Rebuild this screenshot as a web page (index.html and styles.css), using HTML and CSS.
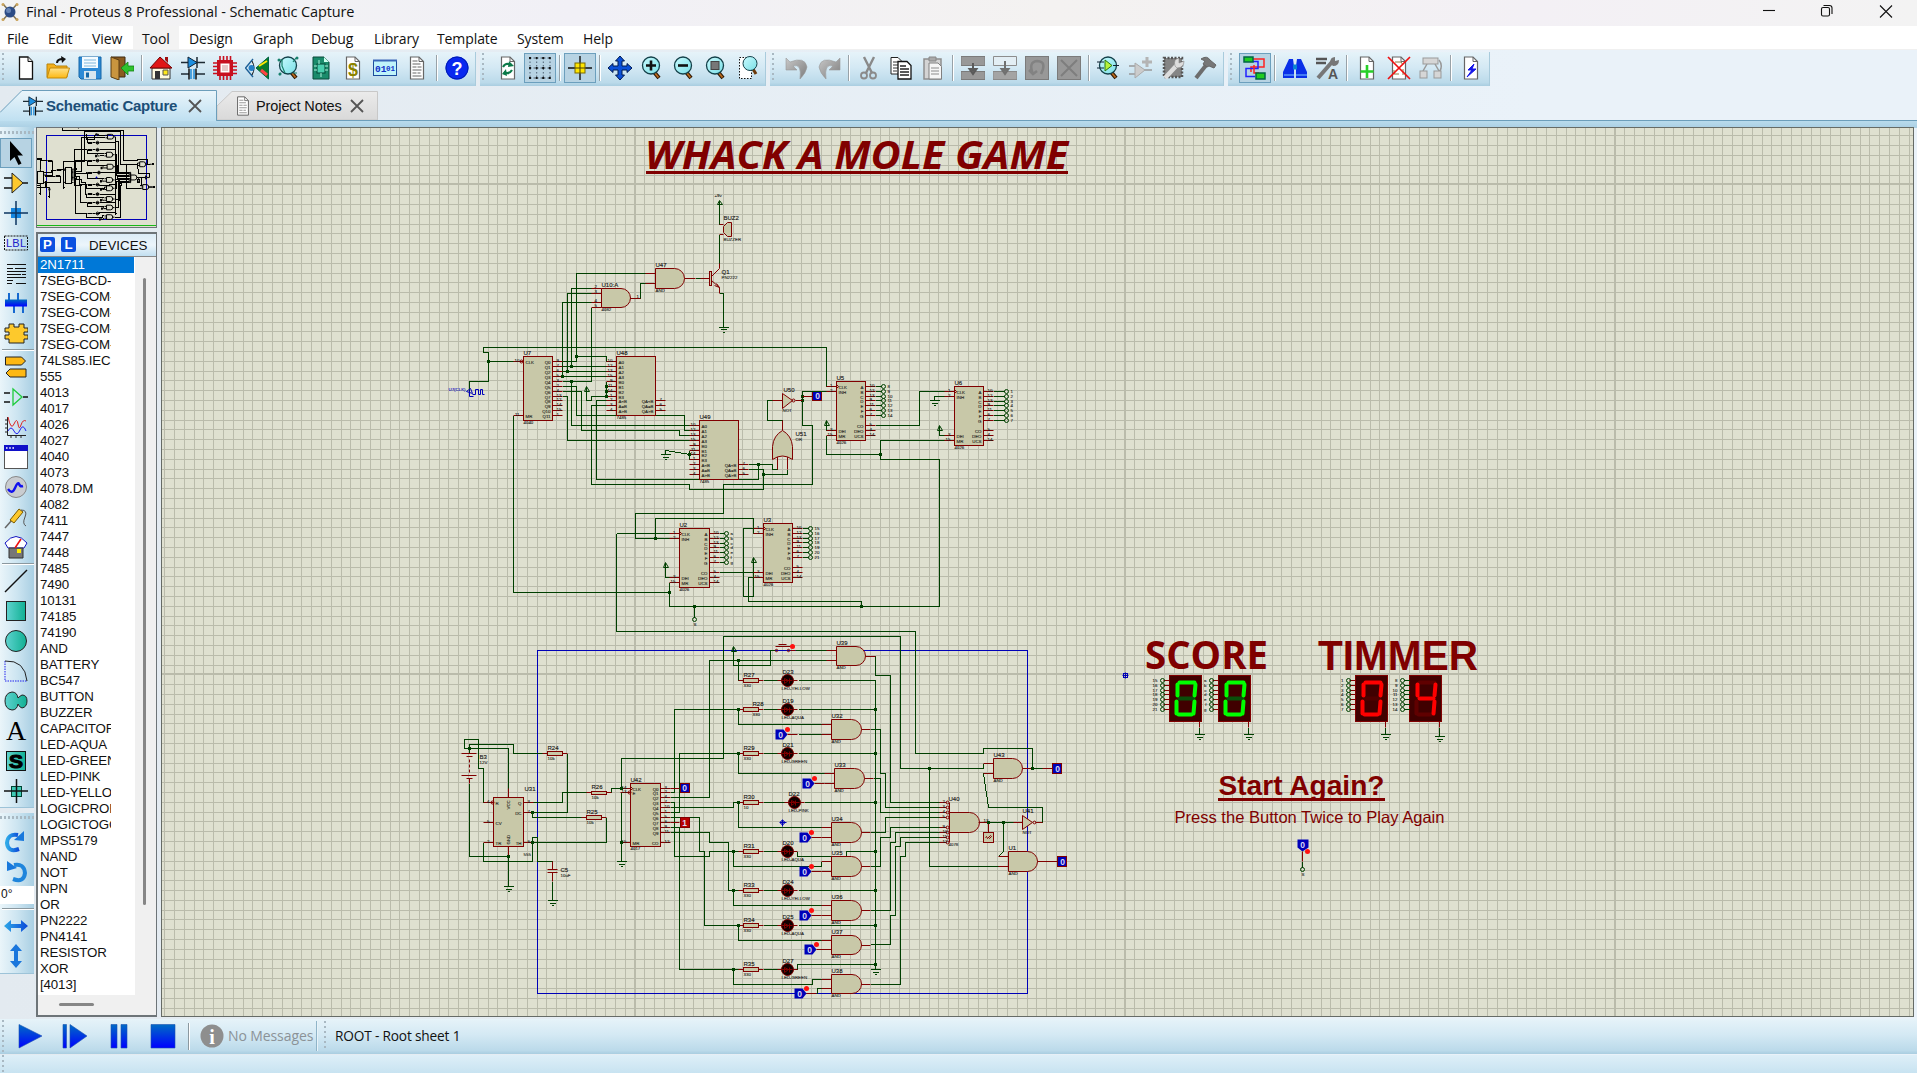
FILE: index.html
```html
<!DOCTYPE html>
<html lang="en">
<head>
<meta charset="utf-8">
<title>Final - Proteus 8 Professional - Schematic Capture</title>
<link rel="stylesheet" href="styles.css">
</head>
<body>
<svg class="defs" width="0" height="0">
  <defs>
    <linearGradient id="gGlass" x1="0" y1="0" x2="1" y2="1"><stop offset="0" stop-color="#c9fbff"/><stop offset="1" stop-color="#7adfe6"/></linearGradient>
    <linearGradient id="gFold" x1="0" y1="0" x2="0" y2="1"><stop offset="0" stop-color="#ffe28a"/><stop offset="1" stop-color="#fdb813"/></linearGradient>
    <linearGradient id="gTeal" x1="0" y1="0" x2="1" y2="0"><stop offset="0" stop-color="#5fd3cf"/><stop offset="1" stop-color="#10b093"/></linearGradient>
    <linearGradient id="gBlue" x1="0" y1="0" x2="0" y2="1"><stop offset="0" stop-color="#006cc4"/><stop offset="1" stop-color="#0000ff"/></linearGradient>
    <linearGradient id="gSky" x1="0" y1="0" x2="1" y2="0"><stop offset="0" stop-color="#2ea9e8"/><stop offset="1" stop-color="#0a48d8"/></linearGradient>
    <linearGradient id="gGrey" x1="0" y1="0" x2="1" y2="1"><stop offset="0" stop-color="#c8c8c8"/><stop offset="1" stop-color="#7c7c7c"/></linearGradient>
    <symbol id="mag" viewBox="0 0 24 24"><path d="M14 16l5 6" stroke="#2a1400" stroke-width="4"/><path d="M14.500 16.500l4 5" stroke="#b8691c" stroke-width="2"/><circle cx="11" cy="9.500" r="8.500" fill="url(#gGlass)" stroke="#14414a" stroke-width="1.300"/></symbol>
    <symbol id="page" viewBox="0 0 24 24"><path d="M5.500 1H14l4.500 4.500V23h-13z" fill="#fff" stroke="#666" stroke-width="1.200"/><path d="M14 1v4.500h4.500" fill="none" stroke="#666"/></symbol>
    <symbol id="comp" viewBox="0 0 24 24"><path d="M0 6.500h24M0 18h8M15 18h9M16 1v11" stroke="#1c2a33" stroke-width="1.500" fill="none"/><path d="M7 1v11l9-5.500z" fill="#1d8fe0" stroke="#123"/><path d="M8 12.500v11M15 12.500v11" stroke="#111" stroke-width="1.500"/><path d="M10 13v10M13 13v10" stroke="#2a8fd8" stroke-width="1.600"/></symbol>
    <symbol id="notes" viewBox="0 0 24 24"><use href="#page"/><path d="M7.500 5h5M7.500 8h8M7.500 11h4M12.500 11h4M7.500 14h9M7.500 17h4M12.500 17h3M7.500 20h9" stroke="#999" stroke-width="1.300"/></symbol>
  </defs>
</svg>

<header class="titlebar">
  <svg class="appicon" viewBox="0 0 20 20"><path d="M3 2l14 16M17 2L3 18" stroke="#7d7259" stroke-width="1.500"/><circle cx="10" cy="10" r="5.500" fill="#2c4c86"/><circle cx="8.500" cy="8.500" r="2.500" fill="#6684b5"/><g fill="#c9a35a"><circle cx="3" cy="2.500" r="1.500"/><circle cx="17" cy="2.500" r="1.500"/><circle cx="3" cy="17.500" r="1.500"/><circle cx="17" cy="17.500" r="1.500"/></g></svg>
  <span class="title">Final - Proteus 8 Professional - Schematic Capture</span>
  <svg class="winbtns" viewBox="0 0 140 26" fill="none" stroke="#111" stroke-width="1.100"><path d="M2 10.500h12"/><rect x="60.500" y="7.500" width="8" height="8.500" rx="1.500"/><path d="M62.500 5.500h6q2.500 0 2.500 2.500v6"/><path d="M119 5.500l12 12M131 5.500l-12 12"/></svg>
</header>
<nav class="menu">
  <span class="m1">File</span><span class="m2">Edit</span><span class="m3">View</span><span class="m4 hover">Tool</span><span class="m5">Design</span><span class="m6">Graph</span><span class="m7">Debug</span><span class="m8">Library</span><span class="m9">Template</span><span class="m10">System</span><span class="m11">Help</span>
</nav>

<div class="toolbars">
  <div class="tb tb1">
    <b class="cell"><svg viewBox="0 0 24 24"><path d="M5.500 1H14l4.500 4.500V23h-13z" fill="#fff" stroke="#111" stroke-width="1.300"/><path d="M14 1v4.500h4.500" fill="#ddd" stroke="#111"/></svg></b>
    <b class="cell"><svg viewBox="0 0 24 24"><path d="M1 8h7l2 2h11v11H1z" fill="#f3b01c" stroke="#b98208"/><path d="M4 12h19.500l-3 10H1z" fill="url(#gFold)" stroke="#c48a0a"/><path d="M11 7q0-4 6-4" fill="none" stroke="#111" stroke-width="2"/><path d="M15 0l5 3-4 4z" fill="#111"/></svg></b>
    <b class="cell"><svg viewBox="0 0 24 24"><path d="M1 1h22v22H3l-2-2z" fill="#2d8ad6" stroke="#1567a8"/><path d="M4 1h16v11H4z" fill="#f4fbff"/><path d="M6 4h12M6 7h12M6 10h12" stroke="#7fb6dc"/><path d="M6 15h12v8H6z" fill="#d8e6ef"/><path d="M8 16.500h3v5H8z" fill="#1567a8"/></svg></b>
    <b class="cell"><svg viewBox="0 0 24 24"><path d="M1 1h14v20H9" fill="#8a5b20" stroke="#3e2a10"/><path d="M1 1l8 3v20l-8-3z" fill="#c9953f" stroke="#5a3d13"/><path d="M11 12l7-6v4h6v5h-6v4z" fill="#2fc32f" stroke="#148014" stroke-width=".8"/></svg></b>
    <i class="sep"></i>
    <b class="cell"><svg viewBox="0 0 24 24"><path d="M3 12h18v11H3z" fill="#fffbe0" stroke="#333"/><path d="M1 12L11 1l12 11z" fill="#e01717" stroke="#700"/><path d="M16 1h3v6l-3-3z" fill="#a01010"/><path d="M6 15h5v8H6z" fill="#333"/><path d="M14 14h5v5h-5z" fill="#ffe81c" stroke="#555"/></svg></b>
    <b class="cell"><svg viewBox="0 0 24 24"><use href="#comp"/></svg></b>
    <b class="cell"><svg viewBox="0 0 24 24"><path d="M7 0v24M10.500 0v24M14 0v24M17.500 0v24M0 7h24M0 10.500h24M0 14h24M0 17.500h24" stroke="#c80f1f" stroke-width="1.600"/><rect x="4" y="4" width="16" height="16" fill="#c80f1f"/><rect x="7.500" y="7.500" width="9" height="9" fill="#fff"/><path d="M9 9h6v6H9z" fill="#e8c8c8"/></svg></b>
    <b class="cell"><svg viewBox="0 0 24 24"><path d="M8 3L0.500 12 8 21" fill="none" stroke="#1d5f96" stroke-width="1.400"/><path d="M7 5Q11 12 7 19" fill="none" stroke="#111"/><circle cx="6.500" cy="12" r="3" fill="#2580c8"/><path d="M11 12L23.500 1v22z" fill="#0a7b2b" stroke="#064"/><path d="M16 14l6 5" stroke="#f44" stroke-width="3"/><path d="M14 10l8-5" stroke="#ffe800" stroke-width="2"/></svg></b>
    <b class="cell"><svg viewBox="0 0 24 24"><use href="#mag"/><path d="M1 4h4v6l3 7M19 2l-3 4M4 17l-2 2M20 17h-4" fill="none" stroke="#18806c" stroke-width="1.200"/><circle cx="2" cy="4" r="1.500" fill="#18806c"/><circle cx="20" cy="2" r="1.500" fill="#18806c"/><circle cx="3" cy="18" r="1.500" fill="#18806c"/></svg></b>
    <b class="cell"><svg viewBox="0 0 24 24"><path d="M4 1h11l5 5v17H4z" fill="#1a8b6b" stroke="#0b4b3a"/><path d="M15 1v5h5" fill="#cfe"/><rect x="8" y="8" width="8" height="9" fill="#49cfae" stroke="#043"/><path d="M5 10h3M5 14h3M16 10h3M16 14h3M10 4v4M12 17v4" stroke="#aef2dd"/></svg></b>
    <b class="cell"><svg viewBox="0 0 24 24"><use href="#page"/><text x="12" y="20" font-size="18" font-weight="bold" text-anchor="middle" fill="#8a8200" class="arial">$</text></svg></b>
    <b class="cell"><svg viewBox="0 0 24 24"><rect x=".5" y="4.500" width="23" height="15" fill="#bff3fa" stroke="#1c4c9c"/><path d="M0 4.500h24" stroke="#3a66b8" stroke-width="2"/><text x="2" y="15.500" font-size="9.500" font-weight="bold" fill="#1030c8" class="mono">01</text><text x="13" y="14.500" font-size="7.500" font-weight="bold" fill="#1030c8" class="mono">01</text></svg></b>
    <b class="cell"><svg viewBox="0 0 24 24"><use href="#notes"/></svg></b>
    <i class="sep"></i>
    <b class="cell"><svg viewBox="0 0 24 24"><circle cx="12" cy="12" r="11.500" fill="#0a28f0"/><circle cx="12" cy="12" r="11" fill="none" stroke="#001cae"/><text x="12" y="18.500" font-size="18" font-weight="bold" text-anchor="middle" fill="#fff" class="arial">?</text></svg></b>
  </div>
  <div class="tb tb2">
    <b class="cell"><svg viewBox="0 0 24 24"><use href="#page"/><path d="M7 11q3-5 8-2" fill="none" stroke="#0b7a4a" stroke-width="2.200"/><path d="M13 5l5 5-6 1zM10 13l-4 5 5 2z" fill="#0b7a4a"/><path d="M16 14q-3 5-8 2" fill="none" stroke="#0b7a4a" stroke-width="2.200"/></svg></b>
    <b class="cell on"><svg viewBox="0 0 24 24"><path d="M2 2h20M2 12h20M2 22h20M2 2v20M8.700 2v20M15.300 2v20M22 2v20" stroke="#345" stroke-dasharray="1.500 2" stroke-width=".8" fill="none"/><path d="M1 2h22M1 12h22M1 22h22" stroke="#111" stroke-width="2" stroke-dasharray="2 4.600"/></svg></b>
    <i class="sep"></i>
    <b class="cell on"><svg viewBox="0 0 24 24"><path d="M0 12h24M12 0v24" stroke="#111" stroke-width="1.400"/><rect x="7" y="7" width="10" height="10" fill="#ffe600" stroke="#7a6a00"/><path d="M7 12h10M12 7v10" stroke="#4a3f00"/></svg></b>
    <i class="sep"></i>
    <b class="cell"><svg viewBox="0 0 24 24"><path d="M12 0l4.500 5H14v5h5V7.500l5 4.500-5 4.500V14h-5v5h2.500L12 24l-4.500-5H10v-5H5v2.500L0 12l5-4.500V10h5V5H7.500z" fill="#0b50d8" stroke="#001a50"/></svg></b>
    <b class="cell"><svg viewBox="0 0 24 24"><use href="#mag"/><path d="M6 9.500h10M11 4.500v10" stroke="#111" stroke-width="2.600"/></svg></b>
    <b class="cell"><svg viewBox="0 0 24 24"><use href="#mag"/><path d="M6 9.500h10" stroke="#111" stroke-width="2.600"/></svg></b>
    <b class="cell"><svg viewBox="0 0 24 24"><use href="#mag"/><rect x="7" y="5.500" width="8" height="8" fill="#777" stroke="#444"/></svg></b>
    <b class="cell"><svg viewBox="0 0 24 24"><rect x="3.500" y="1.500" width="12" height="21" fill="#fff" stroke="#111" stroke-dasharray="1.500 1.500"/><path d="M17 13l3 5" stroke="#6d3a0a" stroke-width="3"/><circle cx="14" cy="7.500" r="7" fill="url(#gGlass)" stroke="#14414a"/></svg></b>
  </div>
  <div class="tb tb3">
    <b class="cell"><svg viewBox="0 0 24 24"><path d="M1 2v12h11l-4-4q9-3 7 13 6-6 7-12Q20 0 5 6z" fill="url(#gGrey)" stroke="#999" stroke-width=".6"/></svg></b>
    <b class="cell"><svg viewBox="0 0 24 24"><path d="M23 2v12H12l4-4Q7 7 9 23 3 17 2 11 4 0 19 6z" fill="url(#gGrey)" stroke="#999" stroke-width=".6"/></svg></b>
    <i class="sep"></i>
    <b class="cell"><svg viewBox="0 0 24 24" fill="none" stroke="#8a8a8a"><path d="M7 1l8 16M17 1L9 17" stroke-width="2.400"/><circle cx="7" cy="19.500" r="3" stroke-width="1.800"/><circle cx="16" cy="19.500" r="3" stroke-width="1.800"/></svg></b>
    <b class="cell"><svg viewBox="0 0 24 24"><path d="M2 1.500h7l4 4V18H2z" fill="#fff" stroke="#222"/><path d="M4 6h6M4 9h6M4 12h6M4 15h4" stroke="#333"/><path d="M9 5.500h9l4 4V23H9z" fill="#fff" stroke="#111" stroke-width="1.300"/><path d="M11 10h6M11 13h9M11 16h9M11 19h9" stroke="#222" stroke-width="1.300"/></svg></b>
    <b class="cell"><svg viewBox="0 0 24 24"><path d="M3 3h17v20H3z" fill="#d4d4d4" stroke="#8e8e8e" stroke-width="1.500"/><path d="M8 1h7v4H8z" fill="#aaa" stroke="#888"/><path d="M8 7h9l3.500 3.500V23H8z" fill="#f6f6f6" stroke="#808080"/><path d="M10 12h8M10 15h8M10 18h8" stroke="#8c8c8c"/></svg></b>
    <i class="sep"></i>
    <b class="cell"><svg viewBox="0 0 24 24"><path d="M0 .5h24v9H0zM0 15.500h24v8H0z" fill="#989898" stroke="#7b7b7b"/><path d="M12 7v8M8.500 13h7L12 18z" fill="#666" stroke="#5a5a5a" stroke-width="2"/></svg></b>
    <b class="cell"><svg viewBox="0 0 24 24"><path d="M.5.500h23v9H.5z" fill="#e3eef4" stroke="#8d8d8d"/><path d="M0 15.500h24v8H0z" fill="#a4a4a4" stroke="#8a8a8a"/><path d="M12 5v10M8.500 13h7L12 18z" fill="#777" stroke="#707070" stroke-width="2"/></svg></b>
    <b class="cell"><svg viewBox="0 0 24 24"><rect x=".5" y=".5" width="23" height="23" fill="#989898" stroke="#7b7b7b"/><path d="M8 18Q3 6 12 5q8 0 6 8l-2 5M4 14l4 4 4-3" fill="none" stroke="#828282" stroke-width="2.500"/></svg></b>
    <b class="cell"><svg viewBox="0 0 24 24"><rect x=".5" y=".5" width="23" height="23" fill="#989898" stroke="#7b7b7b"/><path d="M4 4l16 16M20 4L4 20" stroke="#7e7e7e" stroke-width="2"/></svg></b>
    <i class="sep"></i>
    <b class="cell"><svg viewBox="0 0 24 24"><use href="#mag"/><path d="M0 6h7M0 12h7M16 9.500h6" stroke="#123"/><path d="M8 4l7 5.500L8 15z" fill="#b7f23c" stroke="#2b7a12"/></svg></b>
    <b class="cell"><svg viewBox="0 0 24 24"><path d="M0 10h7M0 18h7M15 14h8" stroke="#999" stroke-width="1.500"/><path d="M6 7v15l10-8z" fill="#ccc" stroke="#aaa"/><path d="M18 1v10M13 6h10" stroke="#b4b4b4" stroke-width="3"/></svg></b>
    <b class="cell"><svg viewBox="0 0 24 24"><rect x="3" y="2" width="18" height="19" fill="#858585" stroke="#555" stroke-dasharray="2 1.500" stroke-width="2.500"/><path d="M4 22L16 9" stroke="#ddd" stroke-width="4.500"/><path d="M14 10q-2-7 4-8v5l5-2q0 7-7 7z" fill="#ddd" stroke="#888" stroke-width=".6"/></svg></b>
    <b class="cell"><svg viewBox="0 0 24 24"><path d="M3 22L14 8" stroke="#6d6d6d" stroke-width="4"/><path d="M8 3q6-4 9 1l6 5-2 3-5-2-2 1-4-3 2-3z" fill="#777" stroke="#666"/></svg></b>
  </div>
  <div class="tb tb4">
    <b class="cell on"><svg viewBox="0 0 24 24" fill="none" stroke-width="1.500"><path d="M10 3h11v8H8v5" stroke="#f22"/><path d="M10 5.500h5v7H3v8h9" stroke="#22f"/><path d="M11 9v8h5" stroke="#f22"/><path d="M1 1h9v5H1zM13 17h9v6h-9z" fill="#20cc20" stroke="#064"/></svg></b>
    <i class="sep"></i>
    <b class="cell"><svg viewBox="0 0 24 24"><path d="M6 3h4l1 7v12H0v-6zM18 3h-4l-1 7v12h11v-6z" fill="#0a30e8"/><path d="M10 11h4" stroke="#0b82d6" stroke-width="5"/><path d="M1 19h10M13 19h11" stroke="#7fc8ff"/></svg></b>
    <b class="cell"><svg viewBox="0 0 24 24"><path d="M1 3h11M1 7h10" stroke="#555" stroke-width="2.500"/><path d="M3 22L17 6" stroke="#777" stroke-width="4"/><path d="M15 7q0-6 5-6v4l4-1q0 6-6 6z" fill="#777"/><text x="18" y="23" font-size="14" font-weight="bold" text-anchor="middle" fill="#555" class="arial">A</text></svg></b>
    <i class="sep"></i>
    <b class="cell"><svg viewBox="0 0 24 24"><use href="#page"/><path d="M12 9v13M5.500 15.500h13" stroke="#28d028" stroke-width="2.600"/></svg></b>
    <b class="cell"><svg viewBox="0 0 24 24"><use href="#page"/><path d="M8 6h6l2 3M7 14v4h5M16 13v6" fill="none" stroke="#8a7a40"/><path d="M1 1l22 22M23 1L1 23" stroke="#f01010" stroke-width="1.700"/></svg></b>
    <b class="cell"><svg viewBox="0 0 24 24" fill="#d6d6d6" stroke="#999"><path d="M8 8l-4 7M16 8l4 7M20 4q4 5 1 11" fill="none" stroke-width="1.500"/><rect x="4" y="2" width="15" height="6"/><rect x="1" y="15" width="7" height="7"/><rect x="15" y="15" width="7" height="7"/></svg></b>
    <i class="sep"></i>
    <b class="cell"><svg viewBox="0 0 24 24"><use href="#page"/><path d="M15 8l-6 6h4l-5 7 9-8h-4z" fill="#1414e8" stroke="#1414e8"/></svg></b>
  </div>
</div>

<div class="tabs">
  <svg class="tabshape" viewBox="0 0 400 35"><defs><linearGradient id="tabA" x1="0" y1="0" x2="0" y2="1"><stop offset="0" stop-color="#eaf5fb"/><stop offset="1" stop-color="#bfe0f1"/></linearGradient><linearGradient id="tabB" x1="0" y1="0" x2="0" y2="1"><stop offset="0" stop-color="#ebebeb"/><stop offset="1" stop-color="#d9d9d9"/></linearGradient></defs><path d="M217 34V20l15-14.500h145.500V34z" fill="url(#tabB)" stroke="#c8c8c8"/><path d="M0 26.500L22 4.500h194.500V35H0z" fill="url(#tabA)"/><path d="M0 26.500L22 4.500h194.500v30H400" fill="none" stroke="#6c9ebb"/></svg>
  <div class="tab t1"><svg viewBox="0 0 24 24"><use href="#comp"/></svg><span>Schematic Capture</span><svg class="x" viewBox="0 0 14 14"><path d="M1 1l12 12M13 1L1 13" stroke="#555" stroke-width="1.800"/></svg></div>
  <div class="tab t2"><svg viewBox="0 0 24 24"><use href="#notes"/></svg><span>Project Notes</span><svg class="x" viewBox="0 0 14 14"><path d="M1 1l12 12M13 1L1 13" stroke="#555" stroke-width="1.800"/></svg></div>
</div>

<main class="work">
  <div class="modes">
    <div class="mgroup g1">
      <b class="on"><svg viewBox="0 0 24 24"><path d="M6 0v20l4.500-4 4 8 3-1.500-4-8H19z" fill="#000"/></svg></b>
      <b><svg viewBox="0 0 24 24"><path d="M0 7h8M0 17h8M19 12h5" stroke="#111" stroke-width="1.400"/><path d="M8 2v20l11-10z" fill="#fdc92c" stroke="#222"/></svg></b>
      <b><svg viewBox="0 0 24 24"><rect x="7" y="7" width="10" height="10" fill="#1486e0"/><path d="M0 12h24M12 0v24" stroke="#0b3560" stroke-width="1.500"/></svg></b>
      <b><svg viewBox="0 0 24 24"><rect x=".5" y="5" width="23" height="14" fill="none" stroke="#111" stroke-dasharray="2 1"/><text x="12" y="16" font-size="11" textLength="20" text-anchor="middle" fill="#2020c8" class="arial">LBL</text></svg></b>
      <b><svg viewBox="0 0 24 24"><path d="M3 3.500h19M3 7.500h6M11 7.500h11M3 10.500h19M3 13.500h14M18 13.500h4M3 16.500h19M3 19.500h6M12 22.500h10M3 22.500h5" stroke="#111" stroke-width="1.200"/></svg></b>
      <b><svg viewBox="0 0 24 24"><path d="M5 2v8M14 2v8M10 14v8M19 14v8" stroke="#1668d0" stroke-width="2"/><rect x="1" y="8.500" width="22" height="7" fill="url(#gBlue)"/></svg></b>
      <b><svg viewBox="0 0 24 24"><path d="M5 3h5v3h5V3h5v4h4v4h-4v3h4v4h-4v4H5v-4H1v-4h4v-3H1V7h4z" fill="#fdc92c" stroke="#222"/></svg></b>
      <i></i>
      <b><svg viewBox="0 0 24 24"><path d="M1.500 2h16l4 4-4 4h-16zM22 14H6l-4 4 4 4h16z" fill="#fdb813" stroke="#222"/></svg></b>
      <b><svg viewBox="0 0 24 24"><path d="M0 8h6M0 17h6M19 12h5" stroke="#111" stroke-width="1.400"/><path d="M9 4v16l9-8z" fill="none" stroke="#1ecb3c" stroke-width="1.300"/></svg></b>
      <b><svg viewBox="0 0 24 24" fill="none"><path d="M3.500 2v18.500H22M1 5h2M1 9h2M1 13h2M1 17h2M7 20v3M12 20v3M17 20v3" stroke="#222"/><path d="M4 2q3 14 6 7t4 0 3 1 5-4" stroke="#d22"/><path d="M4 16q3-6 6 0t6-1 6 1" stroke="#22e"/></svg></b>
      <b><svg viewBox="0 0 24 24"><rect x=".500" y=".500" width="23" height="23" fill="#fff" stroke="#555"/><path d="M0 0h24v6H0z" fill="#1010c8"/><path d="M2 3h8" stroke="#fff" stroke-width="1.600" stroke-dasharray="1.600 1.600"/></svg></b>
      <b><svg viewBox="0 0 24 24"><circle cx="12" cy="12" r="10.500" fill="#c9ccd0" stroke="#888"/><path d="M4 14q4 6 7-1t4-4 4 2" fill="none" stroke="#1111ee" stroke-width="2.400"/></svg></b>
      <b><svg viewBox="0 0 24 24"><path d="M1 23l7-8" stroke="#666" stroke-width="1.500"/><path d="M6 15L15 4l4 3-9 11z" fill="#fdc92c" stroke="#7a5a00"/><path d="M17 5q7 0 4 7t1 9" fill="none" stroke="#555"/></svg></b>
      <b><svg viewBox="0 0 24 24"><path d="M1 8q11-13 22 0l-3 5H4z" fill="#fff" stroke="#1414c0"/><path d="M5 13h14v10H5z" fill="#777" stroke="#333"/><path d="M11 13l6-9" stroke="#e11" stroke-width="1.600"/><path d="M13 14h4v4h-4z" fill="#fe0"/></svg></b>
      <i></i>
      <b><svg viewBox="0 0 24 24"><path d="M1 23L23 1" stroke="#111" stroke-width="1.500"/></svg></b>
      <b><svg viewBox="0 0 24 24"><rect x="2.500" y="2.500" width="19" height="19" fill="url(#gTeal)" stroke="#222"/></svg></b>
      <b><svg viewBox="0 0 24 24"><circle cx="12" cy="12" r="10.500" fill="url(#gTeal)" stroke="#222"/></svg></b>
      <b><svg viewBox="0 0 24 24" fill="none"><path d="M1 2v20h22" stroke="#22e" stroke-dasharray="1.500 1"/><path d="M1 2q20-1 22 20" stroke="#222"/></svg></b>
      <b><svg viewBox="0 0 24 24"><path d="M8 3q5 0 6 6 2-2 4-3 5 0 5 6t-5 7q-3-1-4-4-1 6-6 6-7-1-7-9t7-9z" fill="url(#gTeal)" stroke="#222"/></svg></b>
      <b><svg viewBox="0 0 24 24"><text x="12" y="21" font-size="28" text-anchor="middle" class="serif">A</text></svg></b>
      <b><svg viewBox="0 0 24 24"><rect x="2.500" y="2.500" width="19" height="19" fill="url(#gTeal)" stroke="#111"/><text x="12" y="18.500" font-size="18" font-weight="bold" textLength="14" lengthAdjust="spacingAndGlyphs" text-anchor="middle" class="arial heavy">S</text></svg></b>
      <b><svg viewBox="0 0 24 24"><rect x="7.500" y="7.500" width="10" height="10" fill="#3fc9b4" stroke="#043"/><path d="M0 12h24M12.500 0v24" stroke="#111" stroke-width="1.500"/></svg></b>
    </div>
    <div class="mgroup g2">
      <b><svg viewBox="0 0 24 24"><path d="M15 20Q4 24 3 14 4 4 14 6" fill="none" stroke="url(#gSky)" stroke-width="4"/><path d="M20 2v10l-10-1z" fill="#1878dc"/></svg></b>
      <b><svg viewBox="0 0 24 24"><path d="M9 20Q20 24 21 14 20 4 10 6" fill="none" stroke="#1f85dc" stroke-width="4"/><path d="M3 2v10l10-3z" fill="#1878dc"/></svg></b>
      <span class="angle">0°</span>
      <i></i>
      <b><svg viewBox="0 0 24 24"><path d="M0 12l7-6v4h10V6l7 6-7 6v-4H7v4z" fill="url(#gSky)"/></svg></b>
      <b><svg viewBox="0 0 24 24"><path d="M12 0l6 7h-4v10h4l-6 7-6-7h4V7H6z" fill="#1a76dc"/></svg></b>
    </div>
  </div>
  <aside class="side">
    <svg class="overview" id="overview" viewBox="36 127 121 101"></svg>
    <section class="devices">
      <h2><b>P</b><b>L</b><span>DEVICES</span></h2>
      <div class="listwrap">
        <ul>
          <li class="sel">2N1711</li><li>7SEG-BCD-</li><li>7SEG-COM-</li><li>7SEG-COM-</li><li>7SEG-COM-</li><li>7SEG-COM-</li><li>74LS85.IEC</li><li>555</li><li>4013</li><li>4017</li><li>4026</li><li>4027</li><li>4040</li><li>4073</li><li>4078.DM</li><li>4082</li><li>7411</li><li>7447</li><li>7448</li><li>7485</li><li>7490</li><li>10131</li><li>74185</li><li>74190</li><li>AND</li><li>BATTERY</li><li>BC547</li><li>BUTTON</li><li>BUZZER</li><li>CAPACITOR</li><li>LED-AQUA</li><li>LED-GREEN</li><li>LED-PINK</li><li>LED-YELLO</li><li>LOGICPROB</li><li>LOGICTOGG</li><li>MPS5179</li><li>NAND</li><li>NOT</li><li>NPN</li><li>OR</li><li>PN2222</li><li>PN4141</li><li>RESISTOR</li><li>XOR</li><li>[4013]</li>
        </ul>
        <div class="vbar"></div>
      </div>
      <div class="hbar"></div>
    </section>
  </aside>
  <svg class="sheet" id="sheet" viewBox="161 127 1753 890"></svg>
</main>

<footer class="simbar">
  <svg viewBox="0 0 200 34"><g fill="url(#gBlue)" stroke="#1c50b0" stroke-width=".6"><path d="M19 5.500L42 17 19 29z"/><path d="M63 5.500h3.500V29H63zM70 5.500L87 17 70 29zM111 5.500h6V29h-6zM121 5.500h6V29h-6zM151 5.500h24V29h-24z"/></g><path d="M188.500 4v27" stroke="#8b989f"/><path d="M189.500 4v27" stroke="#fff"/><path d="M3 1v32" stroke="#a8b8c2" stroke-width="2" stroke-dasharray="2 3"/></svg>
  <svg class="info" viewBox="0 0 24 24"><circle cx="12" cy="12" r="11.500" fill="#8e8e8e"/><text x="12" y="19.500" font-size="20" font-weight="bold" text-anchor="middle" fill="#fff" class="serif">i</text></svg>
  <span class="nomsg">No Messages</span>
  <i class="bsep"></i>
  <i class="bgrip"></i>
  <span class="root">ROOT - Root sheet 1</span>
</footer>
<div class="status"></div>
<script src="schematic.js"></script>
</body>
</html>
```
FILE: styles.css
```css
* { box-sizing: border-box; }
body {
  margin: 0; width: 1917px; height: 1073px; overflow: hidden;
  display: flex; flex-direction: column;
  background: linear-gradient(90deg, #e3eaf0, #eaf2f9 80%);
  font-family: "Open Sans", "Noto Sans", sans-serif; color: #111;
}
.defs { position: absolute; }
b, i { font-weight: normal; font-style: normal; }
.arial { font-family: "Liberation Sans", sans-serif; }
.mono { font-family: "Liberation Mono", monospace; }
.serif { font-family: "Liberation Serif", serif; }
.heavy { stroke: #000; stroke-width: 1px; }

.titlebar { height: 26px; flex: none; display: flex; align-items: center; background: linear-gradient(90deg, #f3f3f3, #f1f0f6 30%, #f4f2f1 55%, #f3f0f5 80%, #f3f3f3); }
.appicon { width: 20px; height: 20px; margin-top: -2px; }
.title { margin: -4px 0 0 6px; font-size: 14.5px; letter-spacing: -0.13px; white-space: nowrap; }
.winbtns { width: 140px; height: 26px; margin-left: auto; margin-right: 16px; }

.menu { height: 23px; flex: none; display: flex; background: #fff; font-size: 14px; line-height: 25px; letter-spacing: -0.1px; }
.menu span { white-space: nowrap; }
.m1 { width: 41px; padding-left: 7px; }
.m2 { width: 44px; padding-left: 7px; }
.m3 { width: 48px; padding-left: 7px; }
.m4 { width: 46px; padding-left: 9px; }
.m5 { width: 64px; padding-left: 10px; }
.m6 { width: 58px; padding-left: 10px; }
.m7 { width: 63px; padding-left: 10px; }
.m8 { width: 63px; padding-left: 10px; }
.m9 { width: 80px; padding-left: 10px; }
.m10 { width: 65px; padding-left: 10px; }
.m11 { padding-left: 11px; }
.hover { background: #f3f3f3; }

.toolbars { height: 37px; flex: none; padding-top: 2px; border-top: 1px solid #f0f0f0; display: flex; }
.tb { height: 34px; padding-bottom: 2px; display: flex; align-items: center; background: linear-gradient(#e6f3f9, #d4e9f4 45%, #bbdaea 90%, #a9cde0); border-right: 1px solid #a9cbdc; }
.tb::before { content: ""; width: 2px; height: 30px; margin-left: 2px; background: repeating-linear-gradient(#a8b8c2 0 2px, transparent 2px 5px); }
.tb1 { width: 476px; margin-right: 4px; }
.tb2 { width: 286px; margin-right: 4px; }
.tb3 { width: 454px; margin-right: 4px; }
.tb4 { width: 262px; }
.tb1::before { margin-right: 6px; }
.tb2::before { margin-right: 8px; }
.tb3::before { margin-right: 7px; }
.tb4::before { margin-right: 7px; }
.cell { width: 32px; height: 30px; flex: none; display: flex; align-items: center; justify-content: center; }
.cell svg { width: 24px; height: 24px; }
.on { background: #b7d3e3; border: 1px solid #6c9fbd; }
.sep { width: 8px; height: 26px; flex: none; background: linear-gradient(#98a2a8, #98a2a8) 3px 0 / 1px 100% no-repeat, linear-gradient(#fff, #fff) 4px 0 / 1px 100% no-repeat; }
.tb1 .sep:first-of-type { width: 7px; }

.tabs { height: 35px; flex: none; position: relative; border-bottom: 1px solid #6c9ebb; display: flex; }
.tabshape { position: absolute; left: 0; top: 0; width: 400px; height: 35px; }
.tab { position: relative; display: flex; align-items: center; padding-top: 5px; font-family: "Liberation Sans", sans-serif; white-space: nowrap; }
.tab svg { width: 20px; height: 20px; }
.tab .x { width: 14px; height: 14px; }
.t1 { width: 217px; padding-left: 23px; font-size: 15px; font-weight: bold; color: #1c4f78; }
.t1 span { width: 131px; margin: 0 11px 0 3px; letter-spacing: -0.28px; }
.t2 { width: 160px; padding-left: 16px; font-size: 14.5px; color: #111; }
.t2 span { width: 82px; margin: 0 12px 0 3px; letter-spacing: -0.1px; }

.work { height: 897px; flex: none; padding-top: 6px; display: flex; background: linear-gradient(#b9dbed, #aacfe3 7px, transparent 7px); }
.modes { width: 34px; margin-right: 2px; display: flex; flex-direction: column; }
.mgroup { background: linear-gradient(90deg, #eaf5fa, #cde5f1 50%, #a9cfe3); border-bottom: 1px solid #9dc3d8; display: flex; flex-direction: column; }
.mgroup::before { content: ""; height: 3px; background: repeating-linear-gradient(90deg, #a8b8c2 0 2px, transparent 2px 4px); flex: none; }
.g1 { height: 681px; margin-bottom: 5px; }
.g2 { height: 161px; }
.g1::before { margin: 4px 0; }
.g2::before { margin: 3px 0 7px; }
.mgroup b { height: 30px; flex: none; width: 32px; display: flex; align-items: center; justify-content: center; }
.mgroup b svg { width: 24px; height: 24px; }
.mgroup i { height: 2px; flex: none; margin: 1px 0 1px 2px; border-top: 1px solid #8b989f; border-bottom: 1px solid #fff; }
.angle { height: 18px; flex: none; background: #fff; font: 12px/17px "Liberation Sans", sans-serif; padding-left: 1px; margin: 0 0 3px; }

.side { width: 121px; margin-right: 4px; display: flex; flex-direction: column; gap: 4px; }
.overview { width: 121px; height: 101px; display: block; }
.devices { height: 785px; border: 2px solid #6d7478; background: #f0f0f0; border-right-width: 1px; font-family: "Liberation Sans", sans-serif; }
.devices h2 { margin: 0; height: 22px; display: flex; align-items: center; background: linear-gradient(#dcecf7, #ecf5fb 50%, #c2dff0); font-size: 13.3px; font-weight: normal; line-height: 21px; }
.devices h2 b { width: 15px; height: 15px; line-height: 15px; border-radius: 2px; background: #0b50e0; color: #fff; text-align: center; font-weight: bold; margin: -1px 4px 0 2px; }
.devices h2 span { margin-left: 9px; }
.listwrap { display: flex; border-top: 1px solid #888; height: 739px; }
ul { list-style: none; margin: 0; padding: 0; width: 97px; background: #fff; flex: none; }
li { height: 16px; line-height: 16px; font-size: 13.3px; letter-spacing: -0.12px; padding-left: 2px; white-space: nowrap; overflow: hidden; width: 73px; }
li.sel { background: #0078d7; color: #fff; width: 96px; }
.vbar { width: 3px; height: 627px; margin: 21px 0 0 8px; border-radius: 2px; background: #868686; }
.hbar { width: 35px; height: 3px; margin: 8px 0 0 21px; border-radius: 2px; background: #868686; }

.sheet { width: 1753px; height: 890px; display: block; flex: none; }
.grid { stroke: #babbab; stroke-width: 1; }
.major { stroke: #babbab; stroke-width: 2; }
.w, .r, .bl { fill: none; stroke: #004000; stroke-width: 1; }
.r { stroke: #800000; }
.bl { stroke: #0000b8; }
.body { fill: #c8c8a8; stroke: #800000; stroke-width: 1; }
.rect, .w { shape-rendering: crispEdges; }
.round { shape-rendering: auto; }
.dot { fill: #004000; }
.lbl { font: 6px "Liberation Sans", sans-serif; fill: #1c1c1a; stroke: #1c1c1a; stroke-width: .15px; }
.sub { font: 4.4px "Liberation Sans", sans-serif; fill: #1c1c1a; stroke: #1c1c1a; stroke-width: .1px; }
.end { text-anchor: end; }
.mid { text-anchor: middle; }
.led { fill: #100000; stroke: #800000; }
.zero { fill: #0000b8; stroke: #800000; }
.one { fill: #b80000; stroke: #800000; }
.state { font: bold 8.5px "Liberation Sans", sans-serif; fill: #d8d8f4; text-anchor: middle; }
.tog { fill: #0000b8; }
.reddot { fill: #ff1010; }
.seg { fill: #400000; stroke: #800000; }
.bluetext { fill: #0000b8; stroke: #0000b8; }
.head { fill: #800000; font-family: "Liberation Sans", sans-serif; font-weight: bold; }
.segoe { font-family: "Open Sans", sans-serif; }
.italic { font-style: italic; }
.plain { font-weight: normal; }
.overview .w, .overview .r, .overview .body, .overview .led { stroke: #000; fill: none; vector-effect: non-scaling-stroke; }
.overview .bl { vector-effect: non-scaling-stroke; }
.overview text { display: none; }
.overview .zero, .overview .one, .overview .tog, .overview .dot, .overview .reddot { fill: #000; stroke: none; }

.simbar { height: 35px; flex: none; display: flex; align-items: center; margin-top: 1px; padding-bottom: 2px; background: linear-gradient(#e6f3f9, #d4e9f4 45%, #bbdaea 90%, #a9cde0); }
.simbar > svg:first-child { width: 200px; height: 34px; }
.simbar .info { width: 24px; height: 24px; }
.nomsg { margin-left: 4px; width: 87px; font-size: 14px; letter-spacing: -0.1px; color: #8b9297; white-space: nowrap; }
.bsep { width: 2px; height: 30px; margin: 0 6px 0 1px; border-left: 1px solid #8fb4c8; border-right: 1px solid #e8f3f9; }
.bgrip { width: 2px; height: 30px; margin-right: 9px; background: repeating-linear-gradient(#a8b8c2 0 2px, transparent 2px 5px); }
.root { font-size: 13.7px; letter-spacing: -0.18px; white-space: nowrap; }
.status { flex: 1; margin-top: 1px; background: repeating-linear-gradient(#a8b8c2 0 2px, transparent 2px 5px) 2px 0 / 2px 100% no-repeat, linear-gradient(#deeff8, #c8e3f1); }
```
FILE: schematic.js
```js
// Builds the schematic sheet. Each block has its own origin, and its
// coordinates are given in thirds of a pixel from that origin.
let ox = 0, oy = 0;
const out = [];
const X = v => ox + Math.floor(v / 3) + 0.5;
const Y = v => oy + Math.floor(v / 3) + 0.5;
const at = (x, y) => { ox = x; oy = y; };

function line(cls, spec) {
  for (const part of spec.split(';')) {
    const pts = part.trim().split(/\s+/).map(p => {
      const [x, y] = p.split(',').map(Number);
      return X(x) + ',' + Y(y);
    });
    out.push(`<polyline class="${cls}" points="${pts.join(' ')}"/>`);
  }
}
const wire = s => line('w', s);
const pin = s => line('r', s);
const dots = s => s.split(' ').forEach(p => {
  const [x, y] = p.split(',').map(Number);
  out.push(`<rect class="dot" x="${X(x) - 1.5}" y="${Y(y) - 1.5}" width="3" height="3"/>`);
});
const text = (x, y, s, cls = 'lbl') => out.push(`<text class="${cls}" x="${X(x)}" y="${Y(y)}">${s}</text>`);
const box = (x1, y1, x2, y2, cls = 'body rect') =>
  out.push(`<rect class="${cls}" x="${X(x1)}" y="${Y(y1)}" width="${X(x2) - X(x1)}" height="${Y(y2) - Y(y1)}"/>`);
const ring = (x, y, r = 2, cls = 'w') => out.push(`<circle class="${cls} round" cx="${X(x)}" cy="${Y(y)}" r="${r}"/>`);
const poly = (cls, s) => {
  const pts = s.split(' ').map(p => { const [x, y] = p.split(',').map(Number); return X(x) + ',' + Y(y); });
  out.push(`<polygon class="${cls}" points="${pts.join(' ')}"/>`);
};
const ground = (x, y) => wire(`${x - 14},${y} ${x + 16},${y};${x - 8},${y + 8} ${x + 9},${y + 8};${x - 3},${y + 15} ${x + 4},${y + 15}`);
const power = (x, y) => { wire(`${x},${y - 8} ${x},${y + 12}`); poly('w round', `${x - 7},${y + 6} ${x + 8},${y + 6} ${x},${y - 8}`); };

function andGate(x1, y1, x2, y2, name, ins, outTo) {
  const r = (Y(y2) - Y(y1)) / 2, xr = X(x2) - r;
  out.push(`<path class="body" d="M${X(x1)} ${Y(y1)}H${xr}A${r} ${r} 0 0 1 ${xr} ${Y(y2)}H${X(x1)}Z"/>`);
  ins.forEach(y => pin(`${x1 - 30},${y} ${x1},${y}`));
  const m = Math.round((y1 + y2) / 2);
  pin(`${x2},${m} ${outTo},${m}`);
  text(x1, y1 - 6, name);
  text(x1, y2 + 9, name === 'U10:A' ? '4082' : 'AND', 'sub');
}
function chip(x1, y1, x2, y2, name, part, left, right) {
  box(x1, y1, x2, y2);
  text(x1, y1 - 6, name);
  text(x1, y2 + 10, part, 'sub');
  left.forEach(([y, n, l]) => { pin(`${x1 - 30},${y} ${x1},${y}`); text(x1 - 12, y - 1, n, 'sub end'); text(x1 + 5, y + 5, l, 'sub'); });
  right.forEach(([y, n, l]) => { pin(`${x2},${y} ${x2 + 30},${y}`); text(x2 + 12, y - 1, n, 'sub'); text(x2 - 6, y + 5, l, 'sub end'); });
}
const segY = [15, 30, 45, 57, 72, 87, 102];
function counter(x1, y1, x2, name, dx, labels) {
  const l = 'ABCDEFG', n = [10, 12, 13, 9, 11, 6, 7];
  chip(x1, y1, x2, y1 + 177, name, '4026',
    [[y1 + 15, 1, 'CLK'], [y1 + 30, 2, 'INH'], [y1 + 147, 3, 'DEI'], [y1 + 162, 15, 'MR']],
    [...segY.map((d, i) => [y1 + d, n[i], l[i]]), [y1 + 132, 5, 'CO'], [y1 + 147, 4, 'DEO'], [y1 + 162, 14, 'UCS']]);
  segY.forEach((d, i) => {
    wire(`${x2 + 30},${y1 + d} ${x2 + dx - 7},${y1 + d}`);
    ring(x2 + dx, y1 + d);
    text(x2 + dx + 13, y1 + d + 4, labels[i], 'sub');
  });
  poly('r', `${x1},${y1 + 10} ${x1 + 6},${y1 + 15} ${x1},${y1 + 20}`);
}
function state(x, y, v) {
  box(x, y, x + 27, y + 28, v ? 'one rect' : 'zero rect');
  text(x + 14, y + 22, v, 'state');
}
function resistor(x, y, name, val, lx = x) {
  pin(`${x - 15},${y} ${x},${y};${x + 46},${y} ${x + 61},${y}`);
  box(x, y - 5, x + 46, y + 6);
  text(lx, y - 12, name);
  text(lx, y + 18, val, 'sub');
}
function led(x, y, name, kind) {
  pin(`${x - 30},${y} ${x + 31},${y}`);
  ring(x, y, 6, 'led');
  poly('r', `${x - 8},${y - 7} ${x - 8},${y + 8} ${x + 4},${y}`);
  pin(`${x + 5},${y - 7} ${x + 5},${y + 8};${x - 17},${y} ${x + 15},${y}`);
  text(x - 16, y - 22, name);
  text(x - 18, y + 28, kind, 'sub');
}
function toggle(x, y) {
  poly('tog', `${x},${y - 15} ${x + 24},${y - 15} ${x + 36},${y} ${x + 24},${y + 16} ${x},${y + 16}`);
  text(x + 15, y + 8, 0, 'state');
  ring(x + 37, y - 15, 2.5, 'reddot');
  pin(`${x + 36},${y} ${x + 66},${y}`);
}
const row = (ys, ns, ls) => ys.map((y, i) => [y, ns[i], ls[i]]);

// Random source and comparators
at(440, 190);
wire('838,45 838,103;838,133 838,220;838,310 850,310 850,411;409,514 409,250 616,250;601,325 601,280 616,280;394,529 394,295 454,295;382,544 382,310 454,310;367,559 367,337 454,337;368,574 454,574 454,352');
wire('368,514 409,514;409,499 499,499 499,514;368,529 499,529;368,544 499,544;368,559 499,559;394,574 394,706 748,706;368,589 409,589 409,676 734,676 734,721 748,721;368,604 425,604 425,721 718,721 718,736 748,736;368,619 382,619 382,751 748,751');
wire('499,574 499,619;440,600 440,631 454,631 454,619 499,619;499,631 470,631 470,868 955,868 955,823;499,646 454,646 454,883 748,883 748,898 970,898 970,838 926,838');
wire('88,600 88,574 145,574 145,487 130,487 130,472 1160,472 1160,589;145,514 220,514;220,676 220,960;748,781 748,808;675,793 675,781 748,793;926,823 997,823 997,838 1012,838;970,853 1042,853 1042,838');
wire('1027,691 982,691 982,631 997,631;1160,604 1087,604 1087,706 1117,706 1117,883 850,883 850,960;765,265 780,265');
chip(250, 499, 338, 691, 'U7', '4040', [[514, 10, 'CLK'], [676, 11, 'MR']],
  row([514, 529, 544, 559, 574, 589, 604, 619, 631, 646, 661, 676], [9, 7, 6, 5, 3, 2, 4, 13, 12, 14, 15, 1], ['Q0', 'Q1', 'Q2', 'Q3', 'Q4', 'Q5', 'Q6', 'Q7', 'Q8', 'Q9', 'Q10', 'Q11']));
const inN = [10, 12, 13, 15, 9, 11, 14, 1, 2, 3, 4], inL = ['A0', 'A1', 'A2', 'A3', 'B0', 'B1', 'B2', 'B3', 'A&lt;B', 'A=B', 'A&gt;B'], oL = ['QA&lt;B', 'QA=B', 'QA&gt;B'];
chip(529, 499, 647, 676, 'U48', '7485', row([514, 529, 544, 559, 574, 589, 604, 619, 631, 646, 661], inN, inL), row([631, 646, 661], [7, 6, 5], oL));
chip(778, 691, 896, 868, 'U49', '7485', row([706, 721, 736, 751, 766, 781, 793, 808, 823, 838, 853], inN, inL), row([823, 838, 853], [7, 6, 5], oL));
ring(244, 514, 1.5, 'r');
andGate(646, 235, 734, 296, 'U47', [250, 280], 766);
andGate(484, 295, 572, 352, 'U10:A', [295, 310, 337, 352], 601);
text(588, 322, 1, 'sub');
[2, 3, 4, 5].forEach((n, i) => text(462, [293, 308, 335, 350][i], n, 'sub'));
dots('409,499 394,529 382,544 367,559 394,574 145,514 499,589 499,604 499,619 748,793 955,823 970,853 1087,619 1087,631');
pin('838,103 850,103;838,133 850,133;780,265 808,265;838,220 838,235 813,258;813,270 838,293 838,310;822,286 837,293 830,279;1012,838 1012,797;1042,838 1042,797;1027,691 1027,722;997,631 1027,631;1066,631 1087,631;1087,619 1117,619');
poly('body', '862,97 875,97 875,139 862,139 850,127 850,109');
box(808, 244, 815, 286);
text(850, 88, 'BUZ2'); text(850, 152, 'BUZZER', 'sub'); text(845, 250, 'Q1'); text(845, 266, 'PN2222', 'sub'); text(824, 20, '+9v', 'sub');
power(838, 38); power(440, 597); ground(850, 411); ground(675, 793);
out.push(`<path class="body" d="M${X(997)} ${Y(808)}V${Y(770)}Q${X(1000)} ${Y(735)} ${X(1027)} ${Y(722)}Q${X(1055)} ${Y(735)} ${X(1058)} ${Y(770)}V${Y(808)}Q${X(1027)} ${Y(786)} ${X(997)} ${Y(808)}Z"/>`);
poly('body', '1027,610 1027,655 1057,631'); ring(1061, 631, 1.5, 'r');
text(1029, 604, 'U50'); text(1027, 665, 'NOT', 'sub'); text(1067, 736, 'U51'); text(1067, 752, 'OR', 'sub');
state(1117, 604, 0);
line('bl', '80,604 90,595 96,610 80,604;88,600 88,619 100,619;98,613 106,613 106,598 114,598 114,613 122,613 122,598 127,598 127,613 132,613');
text(25, 600, 'U7(CLK)', 'sub bluetext');

// Timer counters
at(760, 360);
wire('127,94 199,94;199,190 199,211;199,226 199,283 361,283 361,241 553,241;361,283 361,298 538,298 538,739 0,739;347,196 478,196 478,94 553,94;553,109 523,109 523,121;538,205 538,226 553,226;0,724 304,724 304,739');
counter(229, 64, 317, 'U5', 53, [8, 9, 10, 11, 12, 13, 14]);
counter(583, 79, 671, 'U6', 68, [1, 2, 3, 4, 5, 6, 7]);
power(199, 190); power(538, 205); ground(523, 121); dots('361,283 304,739');

// Score counters
at(500, 480);
wire('40,0 40,337 508,337;670,14 670,100 406,100 406,175 508,175;349,160 508,160;349,160 349,454 1247,454;466,175 466,115 760,115 760,160;760,145 730,145 730,349 760,349 760,240;659,277 760,277;760,292 745,292 745,364 1084,364;508,307 508,379 1084,379;583,379 583,411;496,260 496,292 508,292');
counter(538, 145, 629, 'U2', 50, ['a', 'b', 'c', 'd', 'e', 'f', 'g']);
counter(790, 130, 878, 'U3', 53, [15, 16, 17, 18, 19, 20, 21]);
power(496, 255); power(760, 240); dots('466,175 508,337 583,379'); ring(583, 418); text(580, 437, 'S', 'sub');

// Astable and decade counter
at(440, 630);
box(292, 61, 1762, 1090, 'bl rect');
wire('130,517 130,415 115,415 115,328 73,328 73,355 205,355 205,475;88,370 88,343 220,343 220,370 308,370;88,460 88,679 205,679;278,517 367,517 367,487 440,487;382,370 382,547 278,547 278,562 423,562;500,562 500,637 278,637;130,637 130,694 278,694 278,622 292,622 292,694 337,694;205,679 205,769;337,754 337,811;514,487 514,475 544,475');
wire('544,475 544,385 850,385 850,19 1382,19;544,487 544,694;690,487 703,487 703,238 895,238;690,502 808,502 808,91 895,91;690,517 703,517 703,679 808,679 808,664 880,664;690,532 880,532 880,517 895,517;690,547 718,547 718,370 895,370;690,562 778,562 778,664 793,664 793,886 895,886;690,592 718,592 718,1018 880,1018;690,607 808,607 808,637 865,637 865,781 880,781');
chip(160, 502, 251, 649, '', '', [[517, 4, 'R'], [577, 5, 'CV'], [637, 2, 'TR']], [[517, 3, 'Q'], [547, 7, 'DC'], [637, 6, 'TH']]);
text(252, 481, 'U31');
chip(571, 460, 662, 649, 'U42', '4017', [[475, 14, 'CLK'], [487, 13, 'E'], [637, 15, 'MR']],
  row([475, 487, 502, 517, 532, 547, 562, 577, 592, 607, 637], [3, 2, 4, 7, 10, 1, 5, 6, 9, 11, 12], ['Q0', 'Q1', 'Q2', 'Q3', 'Q4', 'Q5', 'Q6', 'Q7', 'Q8', 'Q9', 'CO']));
pin('205,475 205,502;205,649 205,679;63,370 110,370;79,379 96,379;88,388 88,398;88,403 88,412;88,418 88,428;63,436 110,436;79,445 96,445;88,445 88,460;337,694 337,718;321,718 353,718;321,727 353,727;337,727 337,754;690,475 718,475;690,577 718,577');
poly('r', '571,470 577,475 571,480'); ring(568, 487, 1.5, 'r'); ring(157, 517, 1.5, 'r');
resistor(322, 370, 'R24', '10k'); resistor(454, 488, 'R26', '10k'); resistor(439, 562, 'R25', '10k');
text(119, 385, 'B3'); text(119, 401, '12V', 'sub'); text(361, 724, 'C5'); text(361, 740, '10uF', 'sub'); text(250, 677, '555', 'sub');
out.push(`<text class="sub" transform="translate(${X(209)} ${Y(537)}) rotate(-90)">VCC</text><text class="sub" transform="translate(${X(209)} ${Y(642)}) rotate(-90)">GND</text>`);
dots('88,355 278,547 278,637 205,679 544,475 544,637'); ground(205, 769); ground(337, 811); ground(544, 694);
state(720, 460, 0); state(720, 563, 1);

// Mole LEDs, toggles and gates
at(720, 630);
wire('40,55 40,106 152,106 152,61 163,61;225,61 318,61;0,91 318,91;55,91 55,151;130,151 172,151;234,151 466,151 466,1018;55,238 55,283 304,283;55,370 55,430 312,430;55,517 55,592 304,592;40,664 40,709 304,709 304,694;40,781 40,826 304,826;55,886 55,931 304,931;40,1018 40,1063 277,1063 277,1048 304,1048');
wire('130,238 172,238;234,238 466,238;130,370 172,370;234,370 466,370;130,517 192,517;252,517 466,517;130,664 172,664;232,664 232,679 379,679 379,664 466,664;130,781 172,781;234,781 466,781;130,886 172,886;234,886 466,886;130,1018 172,1018;232,1018 232,1003 466,1003;40,664 55,664;40,781 55,781;40,1018 55,1018');
wire('235,313 304,313;466,76 466,136 512,136 512,517 660,517;452,298 481,298 481,430 497,430 497,532 660,532;460,445 481,445 481,547 660,547;452,607 497,607 497,562 660,562;452,709 481,709 481,622 512,622 512,592 660,592;452,841 512,841 512,637 527,637 527,607 660,607;452,943 512,943 512,856 527,856 527,649 542,649 542,622 660,622;452,1063 542,1063 542,679 557,679 557,637 660,637');
wire('292,1090 292,1075 304,1075');
pin('165,49 210,49;210,61 225,61;175,43 200,43'); ring(169, 61, 1.2, 'r'); ring(205, 61, 1.2, 'r'); ring(217, 49, 2.5, 'reddot');
power(40, 57);
resistor(70, 151, 'R27', '330'); resistor(70, 238, 'R28', '330', 98); resistor(70, 370, 'R29', '330'); resistor(70, 517, 'R30', '10', 71);
resistor(70, 664, 'R31', '330'); resistor(70, 781, 'R33', '330'); resistor(70, 886, 'R34', '330'); resistor(70, 1018, 'R35', '330');
led(202, 151, 'D23', 'LED-YELLOW'); led(202, 238, 'D19', 'LED-AQUA'); led(202, 370, 'D21', 'LED-GREEN'); led(222, 517, 'D22', 'LED-PINK');
led(202, 664, 'D20', 'LED-AQUA'); led(202, 781, 'D24', 'LED-YELLOW'); led(202, 886, 'D25', 'LED-AQUA'); led(202, 1018, 'D27', 'LED-GREEN');
andGate(349, 49, 437, 106, 'U39', [61, 91], 466); andGate(334, 268, 425, 328, 'U32', [283, 313], 452); andGate(343, 415, 432, 475, 'U33', [430, 460], 460);
andGate(334, 577, 425, 637, 'U34', [592, 622], 452); andGate(334, 679, 425, 739, 'U35', [694, 724], 452); andGate(334, 811, 425, 871, 'U36', [826, 856], 452);
andGate(334, 916, 425, 973, 'U37', [931, 958], 452); andGate(334, 1033, 425, 1090, 'U38', [1048, 1075], 452);
toggle(165, 313); toggle(246, 460); toggle(237, 622); toggle(237, 724); toggle(237, 856); toggle(252, 958); toggle(222, 1090);
dots('55,91 55,238 55,370 55,517 40,664 40,781 55,886 40,1018 466,238 466,370 466,517 466,664 466,781 466,886 466,1003'); ground(466, 1018);
line('bl', '178,577 198,577;187,568 187,588'); ring(187, 577, 2, 'bl');

// Result logic
at(880, 630);
wire('62,19 62,415 310,415 310,400;107,4 107,370 310,370 310,355 458,355 458,415 487,415;148,415 148,709 355,709;310,430 325,532 488,532 488,577;325,577 400,577;370,577 370,664 355,679');
pin('208,517 208,637;487,415 517,415;473,694 532,694;325,577 325,607;400,577 428,577;467,577 488,577');
andGate(340, 385, 428, 446, 'U43', [400, 430], 458); andGate(385, 664, 473, 724, 'U1', [679, 709], 532);
out.push(`<path class="body" d="M${X(208)} ${Y(547)}H${X(268)}A10 10 0 0 1 ${X(268)} ${Y(607)}H${X(208)}Z"/>`);
pin('296,577 325,577');
[517, 532, 547, 562, 592, 607, 622, 637].forEach((y, i) => { pin(`178,${y} 198,${y}`); ring(203, y, 1.4, 'r'); text(186, y - 1, [2, 3, 4, 5, 9, 10, 11, 12][i], 'sub'); });
poly('body', '428,557 428,598 458,577'); ring(463, 577, 1.4, 'r');
text(206, 511, 'U40'); text(205, 646, '4078', 'sub'); text(428, 547, 'U41'); text(427, 610, 'NOT', 'sub'); text(311, 575, 13, 'sub');
box(310, 607, 340, 637);
line('r', '316,622 320,619 323,625 330,617 334,620 329,626 324,621');
dots('148,415 458,415 325,577 370,577'); state(517, 401, 0); state(532, 680, 0);

// Score and timer displays
at(1120, 620);
line('bl', '8,166 26,166;17,157 17,175'); box(11, 160, 22, 172, 'bl rect');
function digit(x, on, off, four) {
  const p = (x1, y1, x2, y2, lit) => out.push(`<line x1="${X(x + x1)}" y1="${Y(y1)}" x2="${X(x + x2)}" y2="${Y(y2)}" stroke="${lit ? on : off}" stroke-width="4" stroke-linecap="round"/>`);
  p(30, 186, 74, 186, !four); p(27, 284, 67, 284, !four); p(30, 234, 72, 234, four);
  p(25, 193, 23, 227, true); p(22, 243, 21, 279, !four); p(78, 193, 75, 227, true); p(75, 243, 73, 279, true);
}
[[148, 343, '#00ff00', '#0a500a', 0, 'r'], [295, 343, '#00ff00', '#0a500a', 0, 'r'], [706, 343, '#ff0000', '#500000', 0, 'r'], [868, 349, '#ff0000', '#600000', 1, 'w']].forEach(([x, g, on, off, four, c], k) => {
  box(x, 166, x + 97, 304, 'seg rect');
  digit(x, on, off, !!four);
  segY.forEach((d, i) => {
    line(c, `${x - 17},${166 + d} ${x},${166 + d}`);
    ring(x - 22, 166 + d);
    text(x - 35, 170 + d, k === 0 ? 15 + i : k === 1 ? 'abcdefg'[i] : k === 2 ? i + 1 : 8 + i, 'sub end');
  });
  pin(`${x + 90},304 ${x + 90},322`); wire(`${x + 90},322 ${x + 90},${g}`); ground(x + 89, g);
});
poly('tog', '531,657 564,657 564,682 547,695 531,682'); text(547, 682, 0, 'state');
ring(562, 694, 2.5, 'reddot'); pin('547,693 547,725'); wire('547,725 547,742'); ring(547, 748); text(544, 767, 'S', 'sub');

const drawing = out.join('');

let grid = '';
for (let k = -48; k <= 130; k++) {
  const x = Math.floor(635.1 + k * 9.8);
  if (x > 162 && x < 1913) grid += k % 50 === 0 ? `<path class="major" d="M${x} 127V1017"/>` : `<path class="grid" d="M${x + 0.5} 127V1017"/>`;
}
for (let k = -56; k <= 35; k++) {
  const y = Math.floor(674.9 + k * 9.8);
  if (y > 128 && y < 1016) grid += k % 50 === 0 ? `<path class="major" d="M161 ${y}H1914"/>` : `<path class="grid" d="M161 ${y + 0.5}H1914"/>`;
}
const heading = `
<text class="head segoe italic" x="645" y="169" font-size="39" textLength="423" lengthAdjust="spacingAndGlyphs">WHACK A MOLE GAME</text>
<rect x="646" y="171" width="422" height="3" fill="#800000"/>
<text class="head segoe" x="1145" y="669" font-size="39" textLength="123" lengthAdjust="spacingAndGlyphs">SCORE</text>
<text class="head" x="1318" y="670" font-size="42" textLength="160" lengthAdjust="spacingAndGlyphs">TIMMER</text>
<text class="head" x="1218.500" y="795" font-size="28" textLength="166" lengthAdjust="spacingAndGlyphs">Start Again?</text>
<rect x="1218" y="798" width="167" height="3" fill="#800000"/>
<text class="head plain" x="1174.500" y="823" font-size="16.500" textLength="270" lengthAdjust="spacingAndGlyphs">Press the Button Twice to Play Again</text>`;

document.getElementById('sheet').innerHTML =
  `<rect x="161" y="127" width="1753" height="890" fill="#dfe0d0"/>${grid}${drawing}${heading}
   <rect x="161.500" y="127.500" width="1752" height="889" fill="none" stroke="#666b66"/>`;
document.getElementById('overview').innerHTML =
  `<rect x="36" y="127" width="121" height="101" fill="#dfe0d0"/>
   <g transform="translate(46.300 135.300) scale(.2047 .245) translate(-537.300 -650.300)">${drawing}</g>
   <path d="M37 225.500h119" stroke="#18b818"/>
   <rect x="36.500" y="127.500" width="120" height="100" fill="none" stroke="#6d7478"/>`;
```
